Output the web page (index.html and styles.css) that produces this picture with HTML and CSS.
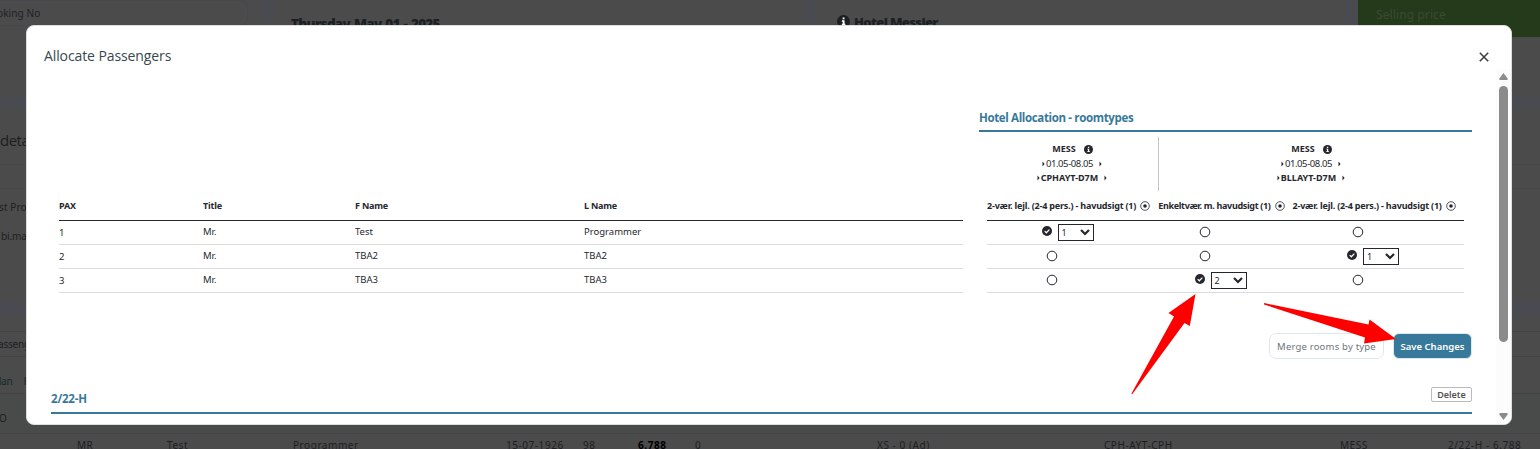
FILE: index.html
```html
<!DOCTYPE html>
<html lang="en">
<head>
<meta charset="utf-8">
<title>Allocate Passengers</title>
<link rel="stylesheet" href="styles.css">
</head>
<body>
<svg class="defs" width="0" height="0">
  <symbol id="info" viewBox="0 0 16 16"><circle cx="8" cy="8" r="8" fill="currentColor"/><path d="M6.9 3h2.4v2.2H6.9zM6 6.5h3.3v4.3h1v1.7H6v-1.7h1V8.2H6z" class="cut"/></symbol>
  <symbol id="check" viewBox="0 0 16 16"><circle cx="8" cy="8" r="8" fill="currentColor"/><path d="M4.3 8.2l2.6 2.6 4.9-5" fill="none" stroke="#fff" stroke-width="2"/></symbol>
  <symbol id="dot" viewBox="0 0 10 10"><circle cx="5" cy="5" r="4.3" fill="none" stroke="currentColor" stroke-width=".8"/><circle cx="5" cy="5" r="1.8" fill="currentColor"/></symbol>
  <symbol id="ring" viewBox="0 0 12 12"><circle cx="6" cy="6" r="4.8" fill="none" stroke="currentColor" stroke-width="1"/></symbol>
  <symbol id="tri" viewBox="0 0 4 6"><path d="M.5 0.6L2.6 3 .5 5.4z" fill="currentColor"/></symbol>
  <symbol id="chev" viewBox="0 0 10 7"><path d="M1 1l4 4 4-4" fill="none" stroke="currentColor" stroke-width="2.2"/></symbol>
</svg>

<div class="page">
  <div class="top">
    <div class="card search"><div class="input">oking No</div></div>
    <div class="card day"><b>Thursday May 01 - 2025</b></div>
    <div class="card hotel"><svg class="i13"><use href="#info"/></svg><b>Hotel Messier</b></div>
    <div class="card price"><div class="green">Selling price</div></div>
  </div>
  <div class="details">
    <div class="d-title">deta</div>
    <div class="d-band"></div>
    <div class="d-name">st Pro</div>
    <div class="d-mail">bi.ma</div>
  </div>
  <div class="lower">
    <div class="l-band">asseng</div>
    <div class="l-tabs"><span class="tab-g"></span><span>an</span><span class="tab-h">H</span></div>
    <div class="l-head">O</div>
    <div class="l-row"><span>MR</span><span>Test</span><span>Programmer</span><span>15-07-1926</span><span>98</span><b>6.788</b><span>0</span><span>XS - 0 (Ad)</span><span>CPH-AYT-CPH</span><span>MESS</span><span>2/22-H - 6.788</span></div>
  </div>
</div>

<section class="modal">
  <header class="m-head"><h1>Allocate Passengers</h1>
    <svg class="close" viewBox="0 0 10 10"><path d="M.8.8l8.4 8.4M9.2.8L.8 9.2" stroke="#3c3c3c" stroke-width="1.5"/></svg>
  </header>
  <div class="m-main">
    <div class="m-body">
      <div class="tables">
        <div class="pax">
          <div class="row head"><span>PAX</span><span>Title</span><span>F Name</span><span>L Name</span></div>
          <div class="row"><span class="n">1</span><span>Mr.</span><span>Test</span><span>Programmer</span></div>
          <div class="row"><span class="n">2</span><span>Mr.</span><span>TBA2</span><span>TBA2</span></div>
          <div class="row"><span class="n">3</span><span>Mr.</span><span>TBA3</span><span>TBA3</span></div>
        </div>
        <div class="alloc">
          <h2>Hotel Allocation - roomtypes</h2>
          <div class="hotels">
            <div class="h h1st">
              <div class="ln"><b class="mess">MESS</b><svg class="i9"><use href="#info"/></svg></div>
              <div class="ln"><svg class="t"><use href="#tri"/></svg><span class="dates">01.05-08.05</span><svg class="t"><use href="#tri"/></svg></div>
              <div class="ln"><svg class="t"><use href="#tri"/></svg><b class="code">CPHAYT-D7M</b><svg class="t"><use href="#tri"/></svg></div>
            </div>
            <div class="h h2nd">
              <div class="ln"><b class="mess">MESS</b><svg class="i9"><use href="#info"/></svg></div>
              <div class="ln"><svg class="t"><use href="#tri"/></svg><span class="dates">01.05-08.05</span><svg class="t"><use href="#tri"/></svg></div>
              <div class="ln"><svg class="t"><use href="#tri"/></svg><b class="code">BLLAYT-D7M</b><svg class="t"><use href="#tri"/></svg></div>
            </div>
          </div>
          <div class="rooms">
            <div class="rhead">
              <span><b class="rt">2-vær. lejl. (2-4 pers.) - havudsigt (1)</b><svg class="i10"><use href="#dot"/></svg></span>
              <span><b class="rt single">Enkeltvær. m. havudsigt (1)</b><svg class="i10"><use href="#dot"/></svg></span>
              <span><b class="rt">2-vær. lejl. (2-4 pers.) - havudsigt (1)</b><svg class="i10"><use href="#dot"/></svg></span>
            </div>
            <div class="rrow">
              <div class="pick"><svg class="i10"><use href="#check"/></svg><div class="sel">1<svg><use href="#chev"/></svg></div></div>
              <svg class="i12"><use href="#ring"/></svg><svg class="i12"><use href="#ring"/></svg>
            </div>
            <div class="rrow">
              <svg class="i12"><use href="#ring"/></svg><svg class="i12"><use href="#ring"/></svg>
              <div class="pick"><svg class="i10"><use href="#check"/></svg><div class="sel">1<svg><use href="#chev"/></svg></div></div>
            </div>
            <div class="rrow">
              <svg class="i12"><use href="#ring"/></svg>
              <div class="pick"><svg class="i10"><use href="#check"/></svg><div class="sel">2<svg><use href="#chev"/></svg></div></div>
              <svg class="i12"><use href="#ring"/></svg>
            </div>
          </div>
        </div>
      </div>
      <div class="actions"><button class="merge">Merge rooms by type</button><button class="save">Save Changes</button></div>
      <div class="room"><h2>2/22-H</h2><button class="del">Delete</button></div>
    </div>
    <div class="scroll">
      <svg width="9" height="7"><path d="M4.5 0L8.6 5.5Q9 7 8 7H1Q0 7 .4 5.5z" fill="#8b8b8b"/></svg>
      <div class="thumb"></div>
      <svg width="9" height="7"><path d="M4.5 7L8.6 1.5Q9 0 8 0H1Q0 0 .4 1.5z" fill="#8b8b8b"/></svg>
    </div>
  </div>
</section>

<svg class="arrows" width="1540" height="449" viewBox="0 0 1540 449">
  <path d="M1195.5 294L1189.8 326 1184.5 323 1132 394.5 1131.5 393.5 1174 316.5 1168.5 313z" fill="#f00"/>
  <path d="M1264 303L1368.5 324.5 1369.5 319.5 1396 339 1364 343.5 1365 337.5 1264 304.5z" fill="#f00"/>
</svg>
</body>
</html>
```
FILE: styles.css
```css
* { box-sizing: border-box; }
body { margin: 0; width: 1540px; height: 449px; overflow: hidden; position: relative; background: #494b50; font-family: "Noto Sans", "Open Sans", sans-serif; font-size: 10px; color: #212529; }
.defs { position: absolute; }
svg { display: block; flex: none; }
h1, h2 { margin: 0; }
button { font-family: inherit; padding: 0; background: #fff; }
.i9 { width: 9px; height: 9px; }
.i10 { width: 10px; height: 10px; }
.i12 { width: 12px; height: 12px; }
.i13 { width: 13px; height: 13px; }
.cut { fill: #fff; }

.page { height: 449px; display: flex; flex-direction: column; gap: 13px; color: #1c2023; white-space: nowrap; }
.top { height: 96px; flex: none; display: flex; gap: 13px; }
.card { background: #4b4b4b; }
.search { width: 261px; }
.input { width: 248px; height: 26px; border: 1px solid #45494d; border-left: 0; border-radius: 0 8px 8px 0; line-height: 25px; letter-spacing: .1px; text-indent: -3px; color: #202224; }
.day { width: 529px; padding: 14px 0 0 17px; font: bold 13.5px/20px "Open Sans"; letter-spacing: -.7px; word-spacing: 1px; }
.hotel { width: 529px; padding: 12px 0 0 21px; display: flex; gap: 4px; font: bold 13px/20px "Open Sans"; letter-spacing: -.65px; }
.hotel .i13 { margin-top: 3px; }
.hotel .cut { fill: #4b4b4b; }
.price { flex: 1; }
.green { height: 37px; background: #243a1b; padding-left: 18px; line-height: 29px; font-size: 12px; letter-spacing: .1px; color: #3a4a35; }
.details { height: 192px; flex: none; background: #4b4b4b; display: flex; flex-direction: column; }
.d-title { height: 55px; font: 15px/62px "Open Sans"; letter-spacing: -.5px; }
.d-band { height: 25px; border: solid #45494d; border-width: 1px 0; }
.d-name { line-height: 37px; letter-spacing: .1px; text-indent: -1px; }
.d-mail { line-height: 20px; padding-left: 1px; letter-spacing: -.1px; }
.lower { flex: 1; margin-top: 2px; background: #4b4b4b; padding-top: 15px; display: flex; flex-direction: column; }
.l-band { height: 26px; line-height: 25px; border: solid #424445; border-width: 1px 0; text-indent: -2px; letter-spacing: -.2px; }
.l-tabs { height: 37px; line-height: 49px; border-bottom: 1px solid #424445; display: flex; color: #14272f; }
.tab-g { width: 1px; height: 8px; margin-top: 20px; background: #173f38; }
.tab-h { margin-left: 11px; }
.l-head { height: 40px; line-height: 48px; background: #484b49; border-bottom: 1px solid #424445; text-indent: -1px; }
.l-row { line-height: 23px; display: grid; grid-template-columns: 90px 126px 213px 77px 55px 57px 182px 227px 236px 108px auto; padding-left: 77px; letter-spacing: .55px; }
.l-row b { color: #000; }

.modal { position: absolute; left: 26px; top: 25px; width: 1486px; height: 400px; background: #fff; border: 1px solid #dedede; border-radius: 8px; overflow: hidden; display: flex; flex-direction: column; white-space: nowrap; color: #26272e; }
.m-head { height: 43px; flex: none; display: flex; justify-content: space-between; padding: 20px 22px 0 17px; }
.m-head h1 { font: 14px/20px "Open Sans"; letter-spacing: -.1px; color: #37474f; }
.close { width: 10px; height: 10px; margin-top: 6px; }
.m-main { flex: 1; display: flex; }
.m-body { flex: 1; padding-left: 24px; display: flex; flex-direction: column; }
.scroll { width: 15px; background: #fcfcfc; display: flex; flex-direction: column; align-items: center; padding-top: 4px; }
.thumb { width: 9px; height: 256px; border-radius: 5px; background: #8b8b8b; margin: 6px 0 71px; }
.tables { height: 224px; display: flex; }
.pax { width: 904px; margin: 127px 16px 0 8px; }
.row { display: grid; grid-template-columns: 144px 152px 229px auto; height: 24px; border-bottom: 1px solid #dcdcdc; line-height: 22px; font-size: 9.5px; }
.row .n { line-height: 24px; }
.row.head { height: 25px; border-color: #26272e; font: bold 9px/20px "Noto Sans"; letter-spacing: -.2px; }
.alloc { width: 493px; padding-top: 37px; }
h2 { font: bold 11.5px/23px "Open Sans"; letter-spacing: -.35px; color: #37799b; }
.alloc h2 { height: 26px; border-bottom: 2px solid #37799b; }
.hotels { display: flex; height: 59px; padding-top: 5px; }
.h { font-size: 9px; padding-top: 5px; }
.h1st { width: 180px; border-right: 1px solid #c4c4c4; padding-left: 8px; }
.h2nd { flex: 1; padding-right: 8px; }
.ln { display: flex; justify-content: center; align-items: center; height: 14.5px; line-height: 14px; }
.mess { margin-right: 8px; }
.t { width: 4px; height: 6px; }
.dates { margin-right: 6px; letter-spacing: -.4px; font-size: 9.5px; }
.code { margin-right: 6px; }
.rooms { width: 477px; margin-left: 8px; }
.rhead { height: 30px; border-bottom: 1px solid #26272e; display: flex; gap: 8px; font-size: 9px; line-height: 30px; }
.rhead span { display: flex; align-items: center; gap: 4px; }
.rt { letter-spacing: -.19px; }
.rt.single { letter-spacing: -.33px; }
.rrow { height: 24px; border-bottom: 1px solid #dcdcdc; display: grid; grid-template-columns: 130px 176px 129px; justify-items: center; align-items: center; }
.rrow > .i12 { margin-bottom: 1px; }
.pick { display: flex; gap: 6px; padding-left: 31px; }
.pick > svg { margin-top: 2px; }
.sel { width: 36px; height: 17px; border: 1px solid #26272e; display: flex; justify-content: space-between; align-items: center; padding: 0 3px; font-size: 9px; }
.sel svg { width: 10px; height: 7px; }
.actions { display: flex; justify-content: flex-end; gap: 9px; padding: 40px 24px 0 0; height: 94px; }
.merge { width: 115px; height: 26px; border: 1px solid #dfe8ee; border-radius: 7px; font-size: 9.5px; color: #6c757d; letter-spacing: .2px; }
.save { width: 79px; height: 26px; border: 1px solid #dfe8ee; border-radius: 6px; background: #37799b; color: #fff; font-size: 9.5px; font-weight: 600; }
.room { width: 1421px; height: 27px; border-bottom: 2px solid #37799b; display: flex; justify-content: space-between; }
.room h2 { line-height: 24px; letter-spacing: -.2px; }
.del { width: 41px; height: 15px; border: 1px solid #bbb; border-radius: 2px; color: #555; font-size: 9px; font-weight: 600; line-height: 12px; }
.arrows { position: absolute; left: 0; top: 0; }
```
